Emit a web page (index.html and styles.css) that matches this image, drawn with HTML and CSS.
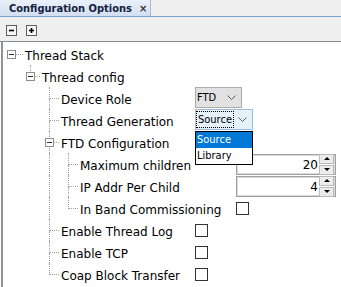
FILE: index.html
```html
<!DOCTYPE html>
<html lang="en">
  <head>
    <meta charset="UTF-8" />
    <title>Configuration Options</title>
    <link rel="stylesheet" href="styles.css">
  </head>
  <body>
    <div class="tabbar">
      <div class="tab">
        <span class="tab-title">Configuration Options</span>
        <span class="tab-close">&times;</span>
      </div>
    </div>

    <div class="toolbar">
      <span class="tool">
        <svg width="11" height="11" viewBox="0 0 11 11">
          <rect x="0.5" y="0.5" width="10" height="10" fill="#f6f6f6" stroke="#5e5e5e" />
          <path d="M3 5.5h5" stroke="#000" stroke-width="1.6" />
        </svg>
      </span>
      <span class="tool">
        <svg width="11" height="11" viewBox="0 0 11 11">
          <rect x="0.5" y="0.5" width="10" height="10" fill="#f6f6f6" stroke="#5e5e5e" />
          <path d="M3 5.5h5M5.5 3v5" stroke="#000" stroke-width="1.6" />
        </svg>
      </span>
    </div>

    <div class="tree">
      <div class="row">
        <span class="indent l1"></span>
        <span class="elbow root"><i class="up"></i><i class="down"></i><b class="box"></b></span>
        <span class="name">Thread Stack</span>
      </div>

      <div class="row">
        <span class="indent l2"></span>
        <span class="elbow last"><i class="up"></i><i class="down"></i><b class="box"></b></span>
        <span class="name">Thread config</span>
      </div>

      <div class="row">
        <span class="indent l3"></span>
        <span class="elbow"><i class="up"></i><i class="down"></i></span>
        <span class="name n3">Device Role</span>
        <span class="combo ftd">
          <span class="combo-text">FTD</span>
          <svg class="chev" width="9" height="5" viewBox="0 0 9 5"><polyline points="0.5,0.5 4.5,4.5 8.5,0.5" /></svg>
        </span>
      </div>

      <div class="row">
        <span class="indent l3"></span>
        <span class="elbow"><i class="up"></i><i class="down"></i></span>
        <span class="name n3">Thread Generation</span>
        <span class="combo open">
          <span class="combo-text focus">Source</span>
          <svg class="chev" width="9" height="5" viewBox="0 0 9 5"><polyline points="0.5,0.5 4.5,4.5 8.5,0.5" /></svg>
          <span class="dropdown">
            <span class="option selected">Source</span>
            <span class="option">Library</span>
          </span>
        </span>
      </div>

      <div class="row">
        <span class="indent l3"></span>
        <span class="elbow"><i class="up"></i><i class="down"></i><b class="box"></b></span>
        <span class="name">FTD Configuration</span>
      </div>

      <div class="row">
        <span class="indent l3"></span>
        <span class="pass"></span>
        <span class="elbow"><i class="up"></i><i class="down"></i></span>
        <span class="name n4">Maximum children</span>
        <span class="spin">
          <span class="spin-val">20</span>
          <span class="spin-btns"><i class="spin-up"></i><i class="spin-down"></i></span>
        </span>
      </div>

      <div class="row">
        <span class="indent l3"></span>
        <span class="pass"></span>
        <span class="elbow"><i class="up"></i><i class="down"></i></span>
        <span class="name n4">IP Addr Per Child</span>
        <span class="spin">
          <span class="spin-val">4</span>
          <span class="spin-btns"><i class="spin-up"></i><i class="spin-down"></i></span>
        </span>
      </div>

      <div class="row">
        <span class="indent l3"></span>
        <span class="pass"></span>
        <span class="elbow last"><i class="up"></i><i class="down"></i></span>
        <span class="name n4">In Band Commissioning</span>
        <span class="check"></span>
      </div>

      <div class="row">
        <span class="indent l3"></span>
        <span class="elbow"><i class="up"></i><i class="down"></i></span>
        <span class="name n3">Enable Thread Log</span>
        <span class="check"></span>
      </div>

      <div class="row">
        <span class="indent l3"></span>
        <span class="elbow"><i class="up"></i><i class="down"></i></span>
        <span class="name n3">Enable TCP</span>
        <span class="check"></span>
      </div>

      <div class="row">
        <span class="indent l3"></span>
        <span class="elbow last"><i class="up"></i><i class="down"></i></span>
        <span class="name n3">Coap Block Transfer</span>
        <span class="check"></span>
      </div>
    </div>
  </body>
</html>
```

FILE: styles.css
```css
html,
body {
  margin: 0;
  height: 100%;
  background: #fff;
}
body {
  font-family: "DejaVu Sans", Tahoma, sans-serif;
  font-size: 12px;
  color: #000;
  overflow: hidden;
}

/* tab strip */
.tabbar {
  display: flex;
  height: 16px;
  background: #efefef;
  border-bottom: 1px solid #7ba2cf;
}
.tab {
  display: flex;
  align-items: center;
  width: 151px;
  box-sizing: border-box;
  padding-left: 9px;
  border-right: 1px solid #a9bcd6;
  background: linear-gradient(#e9f0fa, #d2def0);
  font-family: "DejaVu Sans Condensed", "DejaVu Sans", sans-serif;
  font-weight: bold;
  font-size: 11px;
  color: #13213f;
}
.tab-close {
  margin-left: 7px;
  color: #333;
}

/* toolbar */
.toolbar {
  display: flex;
  gap: 9px;
  height: 25px;
  box-sizing: border-box;
  padding: 8px 0 0 6px;
  background: #efefef;
  border-bottom: 1px solid #8b8b98;
}
.tool svg {
  display: block;
}

/* tree */
.tree {
  margin-left: 1px;
  padding-top: 1px;
  border-left: 2px solid #8f919c;
  height: 245px;
}
.row {
  display: flex;
  align-items: flex-start;
  height: 22px;
  line-height: 22px;
  white-space: nowrap;
}
.indent {
  flex: none;
}
.indent.l1 { width: 8px; }
.indent.l2 { width: 27px; }
.indent.l3 { width: 46px; }

.pass {
  flex: none;
  width: 19px;
  height: 22px;
  box-sizing: border-box;
  border-left: 1px dotted #a0a0a0;
}

.elbow {
  position: relative;
  flex: none;
  display: grid;
  grid-template-rows: 12px 10px;
  width: 10px;
  height: 22px;
}
.elbow i {
  display: block;
  box-sizing: border-box;
}
.elbow .up {
  border-left: 1px dotted #a0a0a0;
  border-bottom: 1px dotted #a0a0a0;
}
.elbow .down {
  border-left: 1px dotted #a0a0a0;
}
.elbow.last .down {
  border-left: 0;
}
.elbow.root {
  width: 12px;
}
.elbow.root .up {
  border-left: 0;
}
.elbow.root .down {
  border-left: 0;
}

/* expand / collapse handle */
.box {
  position: absolute;
  left: -4px;
  top: 7px;
  width: 9px;
  height: 9px;
  box-sizing: border-box;
  border: 1px solid #8e8e8e;
  background: #fff;
}
.box::after {
  content: "";
  position: absolute;
  left: 1px;
  top: 3px;
  width: 5px;
  height: 1px;
  background: #2b2b2b;
}

.name {
  flex: none;
  padding: 2px 0 0 2px;
  line-height: 22px;
}
.name.n3 { width: 133px; }
.name.n4 { width: 155px; }

/* combo boxes */
.combo {
  position: relative;
  display: flex;
  align-items: center;
  justify-content: space-between;
  height: 21px;
  box-sizing: border-box;
  margin-left: 1px;
  padding: 0 5px 0 1px;
  border: 1px solid #adadad;
  background: #e1e1e1;
  font-family: "DejaVu Sans Condensed", "DejaVu Sans", sans-serif;
  font-size: 11px;
  line-height: 15px;
}
.combo.ftd {
  width: 47px;
}
.combo.open {
  width: 58px;
  background: #e5f1fb;
  border-color: #a4bcd8;
}
.combo-text.focus {
  outline: 1px dotted #000;
  outline-offset: 0;
  padding: 0 1px;
}
.chev {
  fill: none;
  stroke: #606060;
}

.dropdown {
  position: absolute;
  left: -1px;
  top: 21px;
  width: 58px;
  box-sizing: border-box;
  border: 1px solid #000;
  background: #fff;
  z-index: 2;
}
.option {
  display: block;
  height: 16px;
  line-height: 16px;
  padding-left: 1px;
}
.option.selected {
  background: #0078d7;
  color: #fff;
}

/* spinners */
.spin {
  display: flex;
  align-items: center;
  margin: 1px 0 0 1px;
  width: 100px;
  height: 21px;
  box-sizing: border-box;
  border: 1px solid #a0a0a0;
  box-shadow: inset 0 0 0 1px #dadada;
  background: #fff;
}
.spin-val {
  flex: 1;
  text-align: right;
  padding: 1px 1px 0 0;
  line-height: 19px;
}
.spin-btns {
  display: flex;
  flex-direction: column;
  gap: 1px;
  width: 15px;
  margin-right: 1px;
}
.spin-btns i {
  position: relative;
  display: block;
  height: 8px;
  border: 1px solid #b9b9b9;
  background: #ececec;
}
.spin-btns i::after {
  content: "";
  position: absolute;
  left: 4px;
  top: 2px;
  border-left: 3px solid transparent;
  border-right: 3px solid transparent;
}
.spin-up::after {
  border-bottom: 3px solid #000;
}
.spin-down::after {
  border-top: 3px solid #000;
}

/* check boxes */
.check {
  display: block;
  margin: 5px 0 0 1px;
  width: 13px;
  height: 13px;
  box-sizing: border-box;
  border: 1px solid #333;
  background: #fff;
}
.name.n4 + .check {
  margin-left: 1px;
}
```
